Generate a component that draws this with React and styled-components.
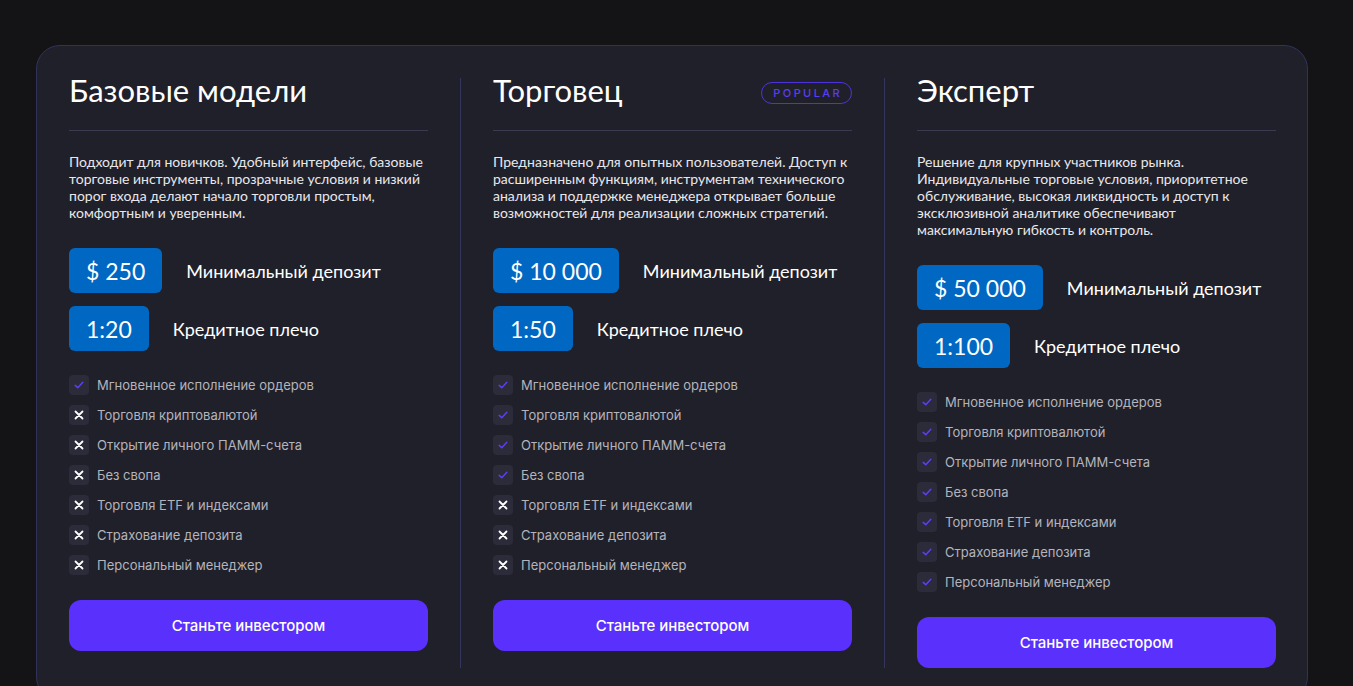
import styled, { createGlobalStyle } from "styled-components";

const GlobalStyle = createGlobalStyle`
  * { box-sizing: border-box; }
  body {
    margin: 0;
    background: #141416;
    font-family: "Lato", "Liberation Sans", sans-serif;
    overflow: hidden;
  }
`;

const plans = [
  {
    title: "Базовые модели",
    text: "Подходит для новичков. Удобный интерфейс, базовые торговые инструменты, прозрачные условия и низкий порог входа делают начало торговли простым, комфортным и уверенным.",
    deposit: "$ 250",
    leverage: "1:20",
    yes: 1,
  },
  {
    title: "Торговец",
    popular: true,
    text: "Предназначено для опытных пользователей. Доступ к расширенным функциям, инструментам технического анализа и поддержке менеджера открывает больше возможностей для реализации сложных стратегий.",
    deposit: "$ 10 000",
    leverage: "1:50",
    yes: 4,
  },
  {
    title: "Эксперт",
    text: "Решение для крупных участников рынка. Индивидуальные торговые условия, приоритетное обслуживание, высокая ликвидность и доступ к эксклюзивной аналитике обеспечивают максимальную гибкость и контроль.",
    deposit: "$ 50 000",
    leverage: "1:100",
    yes: 7,
  },
];

const features = [
  "Мгновенное исполнение ордеров",
  "Торговля криптовалютой",
  "Открытие личного ПАММ-счета",
  "Без свопа",
  "Торговля ETF и индексами",
  "Страхование депозита",
  "Персональный менеджер",
];

const CheckIcon = () => (
  <svg width="12" height="12" viewBox="0 0 12 12" fill="none">
    <path d="M2.2 6.4 L4.8 8.8 L9.8 3.2" stroke="#5f3df5" strokeWidth="1.5" strokeLinecap="round" strokeLinejoin="round" />
  </svg>
);

const CrossIcon = () => (
  <svg width="10" height="10" viewBox="0 0 10 10" fill="none">
    <path d="M1.5 1.5 L8.5 8.5 M8.5 1.5 L1.5 8.5" stroke="#ffffff" strokeWidth="1.8" strokeLinecap="round" />
  </svg>
);

const App = () => {
  return (
    <>
      <GlobalStyle />
      <Card>
        {plans.map((plan, i) => (
          <Column key={plan.title} $first={i === 0} $last={i === plans.length - 1}>
            <Header>
              <Title>{plan.title}</Title>
              {plan.popular && <Badge>POPULAR</Badge>}
            </Header>
            <Description>{plan.text}</Description>
            <Terms>
              <TermRow>
                <Pill>{plan.deposit}</Pill>
                <TermLabel>Минимальный депозит</TermLabel>
              </TermRow>
              <TermRow>
                <Pill>{plan.leverage}</Pill>
                <TermLabel>Кредитное плечо</TermLabel>
              </TermRow>
            </Terms>
            <FeatureList>
              {features.map((f, k) => (
                <Feature key={f}>
                  <IconBox>{k < plan.yes ? <CheckIcon /> : <CrossIcon />}</IconBox>
                  <FeatureText>{f}</FeatureText>
                </Feature>
              ))}
            </FeatureList>
            <Button>Станьте инвестором</Button>
          </Column>
        ))}
      </Card>
    </>
  );
};

export default App;

const Card = styled.div`
  margin: 45px 0 0 36px;
  width: 1272px;
  display: flex;
  align-items: stretch;
  padding: 32px 32px 32px 32px;
  background: #20202a;
  border: 1px solid #30325a;
  border-radius: 24px;
`;

const Column = styled.div`
  flex: 0 0 auto;
  box-sizing: content-box;
  width: 359px;
  display: flex;
  flex-direction: column;
  padding-left: ${(p) => (p.$first ? "0" : "32px")};
  padding-right: ${(p) => (p.$last ? "0" : "32px")};
  border-left: ${(p) => (p.$first ? "none" : "1px solid #34365e")};
`;

const Header = styled.div`
  display: flex;
  justify-content: space-between;
  align-items: flex-start;
  padding-bottom: 28px;
  border-bottom: 1px solid #3a3b50;
`;

const Title = styled.h2`
  margin: 0;
  font-size: 31px;
  line-height: 24px;
  font-weight: 400;
  color: #ffffff;
`;

const Badge = styled.span`
  display: inline-flex;
  align-items: center;
  height: 22px;
  margin: 4px 0 -4px;
  padding: 0 9px 0 11px;
  border: 1.5px solid #4d33dc;
  border-radius: 11px;
  color: #5a3ef0;
  font-family: "Inter", "Liberation Sans", sans-serif;
  font-size: 11px;
  font-weight: 500;
  letter-spacing: 2.4px;
`;

const Description = styled.p`
  margin: 22px 0 0;
  padding-right: 3px;
  font-size: 14px;
  line-height: 17px;
  color: #e8e8ec;
`;

const Terms = styled.div`
  display: flex;
  flex-direction: column;
  gap: 13px;
  margin-top: 27px;
`;

const TermRow = styled.div`
  display: flex;
  align-items: center;
  gap: 24px;
`;

const Pill = styled.div`
  height: 45px;
  display: flex;
  align-items: center;
  padding: 0 17px;
  background: #0068c2;
  border-radius: 6px;
  color: #ffffff;
  font-size: 23px;
`;

const TermLabel = styled.span`
  font-size: 18px;
  color: #ffffff;
`;

const FeatureList = styled.ul`
  list-style: none;
  margin: 24px 0 0;
  padding: 0;
  display: flex;
  flex-direction: column;
  gap: 10px;
`;

const Feature = styled.li`
  display: flex;
  align-items: center;
  gap: 8px;
  height: 20px;
`;

const IconBox = styled.span`
  width: 20px;
  height: 20px;
  flex: 0 0 20px;
  display: flex;
  align-items: center;
  justify-content: center;
  background: #2b2b3a;
  border-radius: 4px;
`;

const FeatureText = styled.span`
  font-family: "Inter", "Liberation Sans", sans-serif;
  font-size: 13px;
  color: #b4b4bc;
`;

const Button = styled.button`
  margin-top: 25px;
  height: 51px;
  width: 100%;
  border: none;
  border-radius: 12px;
  background: #5a30fc;
  color: #ffffff;
  font-family: "Inter", "Liberation Sans", sans-serif;
  font-size: 15px;
  font-weight: 500;
  cursor: pointer;
`;
